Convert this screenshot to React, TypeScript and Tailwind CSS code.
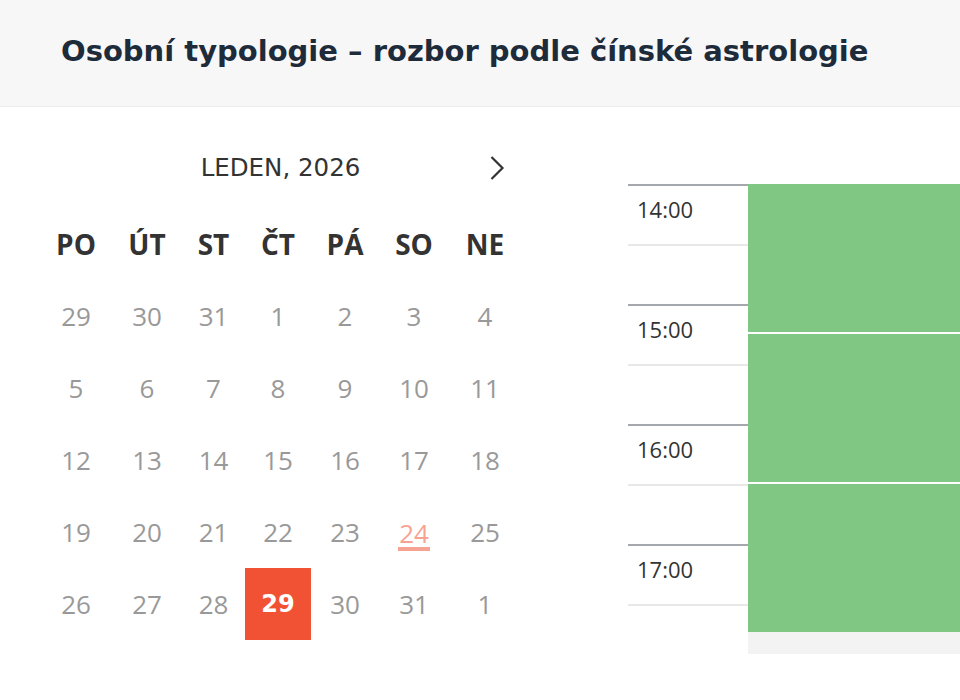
import React from 'react';

const weekDays = ['PO', 'ÚT', 'ST', 'ČT', 'PÁ', 'SO', 'NE'];

const weeks = [
  ['29', '30', '31', '1', '2', '3', '4'],
  ['5', '6', '7', '8', '9', '10', '11'],
  ['12', '13', '14', '15', '16', '17', '18'],
  ['19', '20', '21', '22', '23', '24', '25'],
  ['26', '27', '28', '29', '30', '31', '1'],
];

const hours = ['14:00', '15:00', '16:00', '17:00'];

const cols = 'grid grid-cols-[72px_70px_63px_66px_68px_70px_72px]';

export default function App() {
  return (
    <div className="w-[960px] h-[700px] bg-white overflow-hidden" style={{ fontFamily: '"Open Sans", sans-serif' }}>
      {/* Header */}
      <div className="h-[107px] bg-[#f7f7f7] border-b border-[#ededed] flex items-center pl-[61px]">
        <h1 className="font-['DejaVu_Sans',sans-serif] text-[29px] font-bold text-[#1d2b3a] pb-[2px]">
          Osobní typologie – rozbor podle čínské astrologie
        </h1>
      </div>

      <div className="flex">
        {/* Calendar */}
        <div className="w-[628px] pl-[40px] pt-[35px]">
          <div className="relative w-[481px] h-[52px] flex items-center justify-center">
            <span className="font-['DejaVu_Sans',sans-serif] text-[24.5px] text-[#333]">LEDEN, 2026</span>
            <svg className="absolute left-[449px] top-[13px]" width="16" height="26" viewBox="0 0 16 26" fill="none">
              <path d="M2.5 2 L13.5 13 L2.5 24" stroke="#333" strokeWidth="2.2" />
            </svg>
          </div>
          <div className={`${cols} mt-[14px] h-[72px] items-center`}>
            {weekDays.map((d) => (
              <div key={d} className="text-center text-[28px] font-bold text-[#333]">{d}</div>
            ))}
          </div>
          {weeks.map((w, r) => (
            <div key={r} className={`${cols} h-[72px]`}>
              {w.map((d, c) => {
                if (r === 4 && c === 3) {
                  return (
                    <div key={c} className="bg-[#f15233] flex items-center justify-center">
                      <span className="font-['DejaVu_Sans',sans-serif] text-[24px] font-bold text-white">{d}</span>
                    </div>
                  );
                }
                if (r === 3 && c === 5) {
                  return (
                    <div key={c} className="flex items-center justify-center">
                      <span className="text-[26px] leading-[28px] text-[#f7a393] border-b-[4px] border-[#f7a393] mt-[6px] px-[1px]">{d}</span>
                    </div>
                  );
                }
                return (
                  <div key={c} className="flex items-center justify-center text-[26px] text-[#999]">{d}</div>
                );
              })}
            </div>
          ))}
        </div>

        {/* Day schedule */}
        <div className="flex-1 flex mt-[77px]">
          <div className="w-[120px] shrink-0">
            {hours.map((h, i) => (
              <div key={h}>
                <div className="h-[60px] border-t-2 border-[#a4a7ab] pl-[9px] pt-[7px] text-[22px] text-[#333]">{h}</div>
                <div className={`border-t-2 border-[#e8e8e8] ${i === 3 ? 'h-[2px]' : 'h-[60px]'}`} />
              </div>
            ))}
          </div>
          <div className="flex-1">
            <div className="flex flex-col gap-[2px] bg-white">
              <div className="h-[148px] bg-[#81c784]" />
              <div className="h-[148px] bg-[#81c784]" />
              <div className="h-[148px] bg-[#81c784]" />
            </div>
            <div className="h-[22px] bg-[#f3f3f3]" />
          </div>
        </div>
      </div>
    </div>
  );
}
